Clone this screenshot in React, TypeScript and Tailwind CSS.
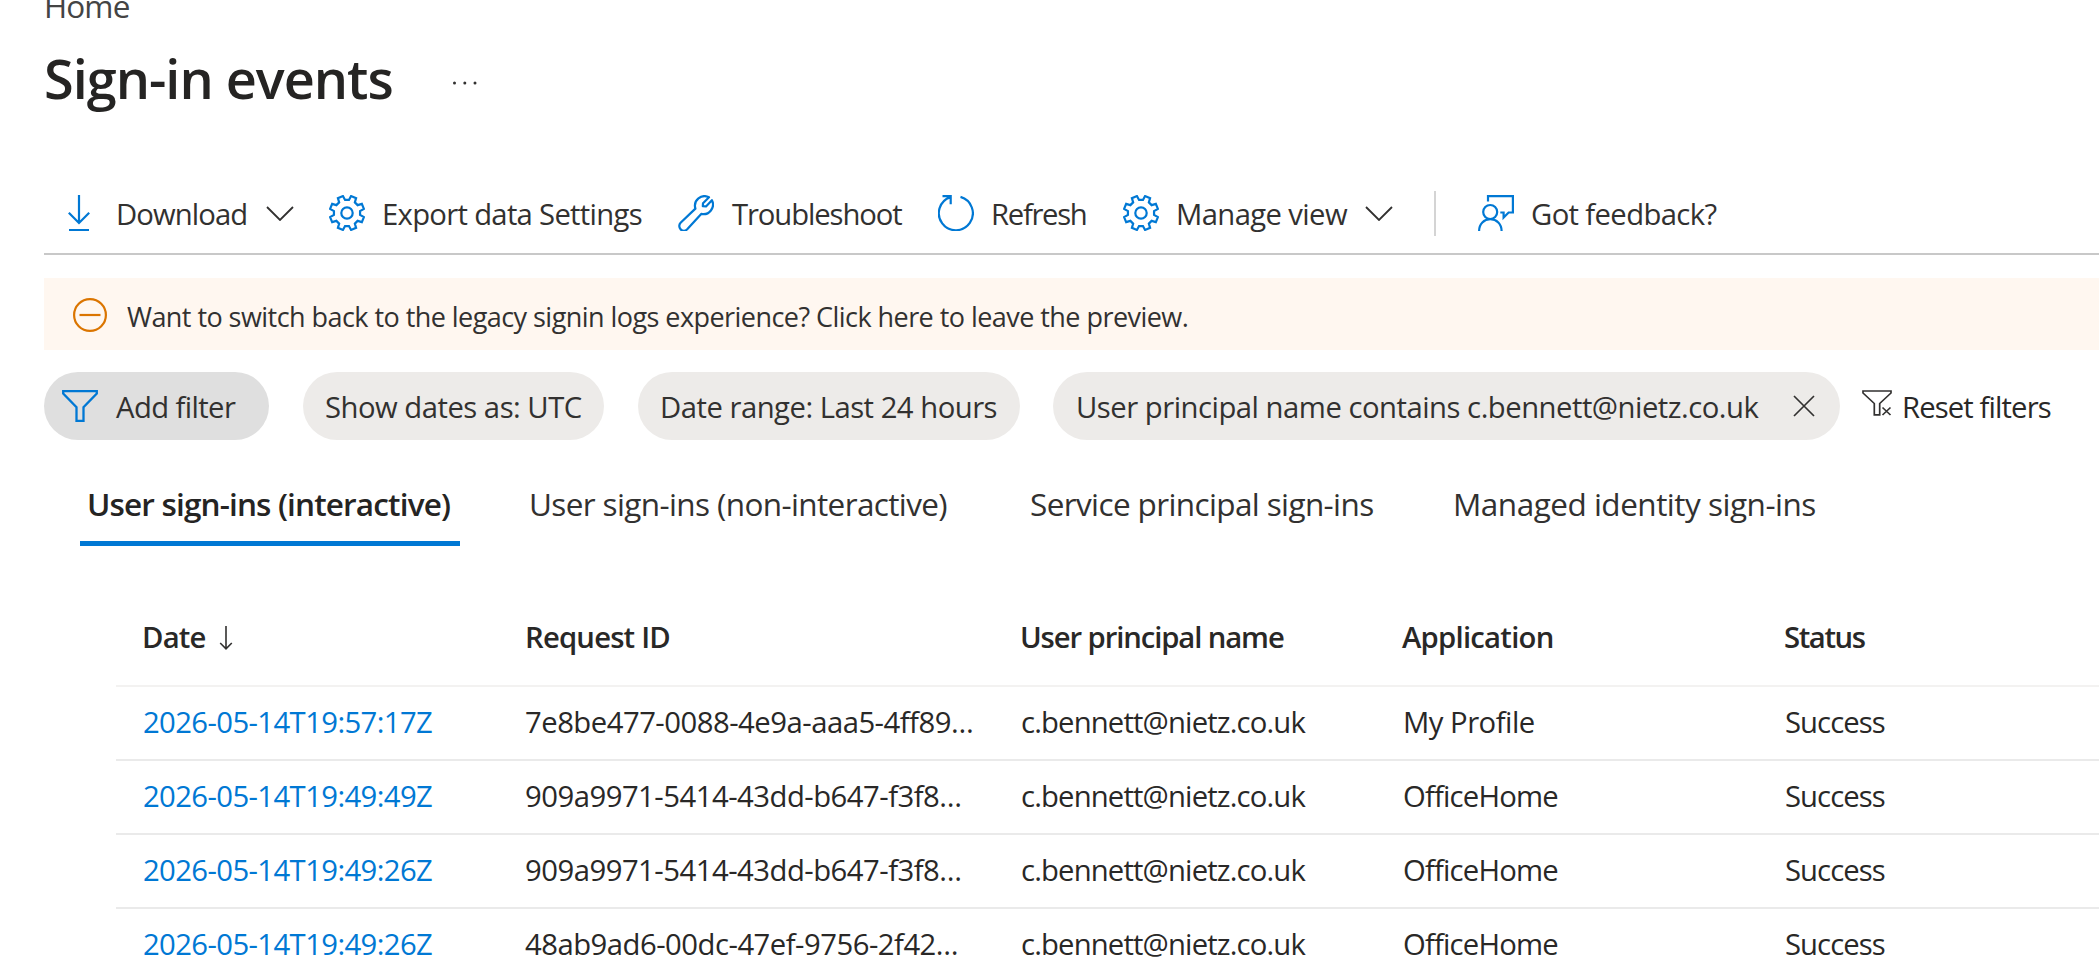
import type { ReactNode } from 'react';
import clsx from 'clsx';

const rows = [
  { date: '2026-05-14T19:57:17Z', id: '7e8be477-0088-4e9a-aaa5-4ff89…', app: 'My Profile' },
  { date: '2026-05-14T19:49:49Z', id: '909a9971-5414-43dd-b647-f3f8…', app: 'OfficeHome' },
  { date: '2026-05-14T19:49:26Z', id: '909a9971-5414-43dd-b647-f3f8…', app: 'OfficeHome' },
  { date: '2026-05-14T19:49:26Z', id: '48ab9ad6-00dc-47ef-9756-2f42…', app: 'OfficeHome' },
];

const tabs = [
  { label: 'User sign-ins (interactive)', className: 'w-[380px] pl-[7px] tracking-[-0.84px]', active: true },
  { label: 'User sign-ins (non-interactive)', className: 'ml-[60px] w-[441px] pl-[9px] tracking-[-0.62px]' },
  { label: 'Service principal sign-ins', className: 'ml-[60px] w-[364px] pl-[9px] tracking-[-0.62px]' },
  { label: 'Managed identity sign-ins', className: 'ml-[60px] w-[381px] pl-[8px] tracking-[-0.5px]' },
];

// Eight-toothed cog, teeth offset so a notch sits at twelve o'clock
const gearPoints = Array.from({ length: 8 })
  .flatMap((_, i) => {
    const mid = i * 45 + 22.5;
    return [
      [mid - 14, 13.2],
      [mid - 9, 17.4],
      [mid + 9, 17.4],
      [mid + 14, 13.2],
    ].map(([deg, r]) => {
      const a = (deg * Math.PI) / 180;
      return `${(18 + r * Math.sin(a)).toFixed(2)},${(18 - r * Math.cos(a)).toFixed(2)}`;
    });
  })
  .join(' ');

function GearIcon() {
  return (
    <svg viewBox="0 0 36 36" className="h-9 w-9 shrink-0" fill="none" stroke="#0078d4" strokeWidth="2.2">
      <polygon points={gearPoints} />
      <circle cx="18" cy="18" r="5.7" />
    </svg>
  );
}

function DownloadIcon() {
  return (
    <svg viewBox="0 0 24 36" className="h-9 w-6 shrink-0" fill="none" stroke="#0078d4" strokeWidth="2.2">
      <path d="M12 0v28M1.8 17.8 12 28l10.2-10.2M2 35h20" />
    </svg>
  );
}

function WrenchIcon() {
  return (
    <svg viewBox="0 0 36 36" className="h-9 w-9 shrink-0" fill="none" stroke="#0078d4" strokeWidth="2.2" strokeLinejoin="round">
      <path d="M31 2.3A9.6 9.6 0 0 0 17.4 13.6L2.6 27.8a4.6 4.6 0 0 0 6.6 6.5L23.2 18.9A9.6 9.6 0 0 0 33.9 5.2L28 11.4 24.8 11.2 25 8.2Z" />
    </svg>
  );
}

function RefreshIcon() {
  return (
    <svg viewBox="0 0 36 36" className="h-9 w-9 shrink-0" fill="none" stroke="#0078d4" strokeWidth="2.2">
      <path d="M22.5 1.9A17 17 0 1 1 12.5 2.1M4.5 1.2h8.2v8" />
    </svg>
  );
}

function FeedbackIcon() {
  return (
    <svg viewBox="0 0 36 36" className="h-9 w-9 shrink-0" fill="none" stroke="#0078d4" strokeWidth="2.2">
      <path d="M10 6.5V1.1h24.9v16.4h-4.3l-5 5v-5h-3.3" />
      <circle cx="12.2" cy="17" r="7" />
      <path d="M1.1 36C1.1 29 6 24.2 12.3 24.2S23.6 29 23.6 36" />
    </svg>
  );
}

function Chevron() {
  return (
    <svg viewBox="0 0 28 15" className="h-[15px] w-7 shrink-0" fill="none" stroke="#323130" strokeWidth="1.8">
      <path d="m1 1 13 13L27 1" />
    </svg>
  );
}

interface CommandProps {
  icon: ReactNode;
  label: string;
  className?: string;
  labelClass: string;
}

function Command({ icon, label, className, labelClass }: CommandProps) {
  return (
    <button className={clsx('flex shrink-0 items-center text-left', className)}>
      {icon}
      <span className={clsx('pt-[3px]', labelClass)}>{label}</span>
    </button>
  );
}

function Pill({ label, className }: { label: string; className: string }) {
  return (
    <button className={clsx('h-[68px] shrink-0 rounded-full bg-[#edebe9] pt-[3px] text-left text-[#323130]', className)}>
      {label}
    </button>
  );
}

export default function App() {
  return (
    <div className="h-[971px] overflow-hidden bg-white pl-11 font-['Open_Sans',sans-serif] text-[29.25px] whitespace-nowrap text-[#323130]">
      <div className="-mt-[14px] text-[31.5px] leading-10 tracking-[-0.9px] text-[#444]">Home</div>

      <header className="mt-4 flex items-center">
        <h1 className="w-[408px] pt-px text-[54px] leading-[71px] font-semibold tracking-[-1px] text-[#252423]">Sign-in events</h1>
        <svg viewBox="0 0 26 4" className="mt-[9px] h-1 w-[26px]" fill="#323130">
          <circle cx="2.5" cy="2" r="1.5" />
          <circle cx="12.8" cy="2" r="1.5" />
          <circle cx="23" cy="2" r="1.5" />
        </svg>
      </header>

      <div className="mt-[59px] flex h-[82px] items-center border-b-2 border-[#c8c8c8] pl-[23px]">
        <Command icon={<DownloadIcon />} label="Download" className="w-[199px]" labelClass="ml-[25px] tracking-[-0.9px]" />
        <div className="w-[63px]">
          <Chevron />
        </div>
        <Command icon={<GearIcon />} label="Export data Settings" className="w-[349px]" labelClass="ml-[17px] tracking-[-0.7px]" />
        <Command icon={<WrenchIcon />} label="Troubleshoot" className="w-[260px]" labelClass="ml-[18px] tracking-[-1.1px]" />
        <Command icon={<RefreshIcon />} label="Refresh" className="w-[185px]" labelClass="ml-[17px] tracking-[-1.3px]" />
        <Command icon={<GearIcon />} label="Manage view" className="w-[242px]" labelClass="ml-[17px] tracking-[-0.62px]" />
        <Chevron />
        <div className="ml-[41px] h-[45px] w-[2px] bg-[#d4d4d4]" />
        <Command icon={<FeedbackIcon />} label="Got feedback?" className="ml-[42px]" labelClass="ml-[17px] tracking-[-0.63px]" />
      </div>

      <div className="mt-[23px] flex h-[72px] items-center bg-[#fff7f0] pl-[29px] text-[27px]">
        <svg viewBox="0 0 34 34" className="mt-[2px] h-[34px] w-[34px] shrink-0" fill="none" stroke="#db7500" strokeWidth="2.2">
          <circle cx="17" cy="17" r="15.9" />
          <path d="M6.5 17h21" />
        </svg>
        <span className="mt-[7px] ml-5 tracking-[-0.55px]">
          Want to switch back to the legacy signin logs experience? Click here to leave the preview.
        </span>
      </div>

      <div className="mt-[22px] flex items-center">
        <button className="flex h-[68px] w-[225px] items-center rounded-full bg-[#dfdfdf] pl-[18px]">
          <svg viewBox="0 0 36 32" className="h-8 w-9 shrink-0" fill="none" stroke="#0078d4" strokeWidth="2.3">
            <path d="M1.2 1.2h33.6v2.4L21.5 17.2v13.6h-7V17.2L1.2 3.6Z" />
          </svg>
          <span className="ml-[18px] pt-[3px] tracking-[-0.6px]">Add filter</span>
        </button>
        <Pill label="Show dates as: UTC" className="ml-[34px] w-[301px] pl-[22px] tracking-[-0.5px]" />
        <Pill label="Date range: Last 24 hours" className="ml-[34px] w-[382px] pl-[22px] tracking-[-0.5px]" />
        <button className="ml-[33px] flex h-[68px] w-[787px] shrink-0 items-center rounded-full bg-[#edebe9] pl-[23px]">
          <span className="w-[717px] pt-[3px] text-left tracking-[-0.49px]">User principal name contains c.bennett@nietz.co.uk</span>
          <svg viewBox="0 0 22 22" className="h-[22px] w-[22px]" fill="none" stroke="#323130" strokeWidth="1.7">
            <path d="m1 1 20 20M21 1 1 21" />
          </svg>
        </button>
        <button className="ml-[22px] flex items-center text-[#292827]">
          <svg viewBox="0 0 30 26" className="mb-[7px] h-[26px] w-[30px]" fill="none" stroke="#323130" strokeWidth="1.7">
            <path d="M1 1h28v2l-11.3 10.5v11.3h-5.4V13.5L1 3Z" />
            <path d="m20.5 17.5 8 7.5m0-7.5-8 7.5" />
          </svg>
          <span className="ml-[10px] pt-[3px] tracking-[-0.88px]">Reset filters</span>
        </button>
      </div>

      <nav className="mt-7 flex pl-9 text-[31.5px] leading-[71px]">
        {tabs.map((tab) => (
          <div
            key={tab.label}
            className={clsx(
              'h-[78px] shrink-0 border-b-[5px]',
              tab.active ? 'border-[#0078d4] font-semibold text-[#252423]' : 'border-transparent',
              tab.className,
            )}
          >
            {tab.label}
          </div>
        ))}
      </nav>

      <div className="mt-[41px] ml-[72px] text-[#292827]">
        <div className="flex h-[100px] items-center border-b-2 border-[#f3f2f1] pt-[3px] pl-[26px] font-semibold">
          <div className="flex w-[383px] items-center">
            <span className="tracking-[-0.8px]">Date</span>
            <svg viewBox="0 0 14 24" className="ml-[13px] h-6 w-[14px]" fill="none" stroke="#323130" strokeWidth="1.6">
              <path d="M7 0v23M1.2 17 7 22.8 12.8 17" />
            </svg>
          </div>
          <div className="w-[495px] tracking-[-0.8px]">Request ID</div>
          <div className="w-[382px] tracking-[-1.1px]">User principal name</div>
          <div className="w-[382px] tracking-[-0.75px]">Application</div>
          <div className="tracking-[-1.4px]">Status</div>
        </div>
        {rows.map((row, i) => (
          <div key={i} className="flex h-[74px] items-center border-b-2 border-[#eaeaea] pl-[27px]">
            <a className="w-[382px] tracking-[-0.6px] text-[#0078d4]">{row.date}</a>
            <div className="w-[496px] tracking-[-0.5px]">{row.id}</div>
            <div className="w-[382px] tracking-[-0.84px]">c.bennett@nietz.co.uk</div>
            <div className={clsx('w-[382px]', row.app === 'OfficeHome' ? 'tracking-[-0.8px]' : 'tracking-[-0.5px]')}>{row.app}</div>
            <div className="tracking-[-0.95px]">Success</div>
          </div>
        ))}
      </div>
    </div>
  );
}
